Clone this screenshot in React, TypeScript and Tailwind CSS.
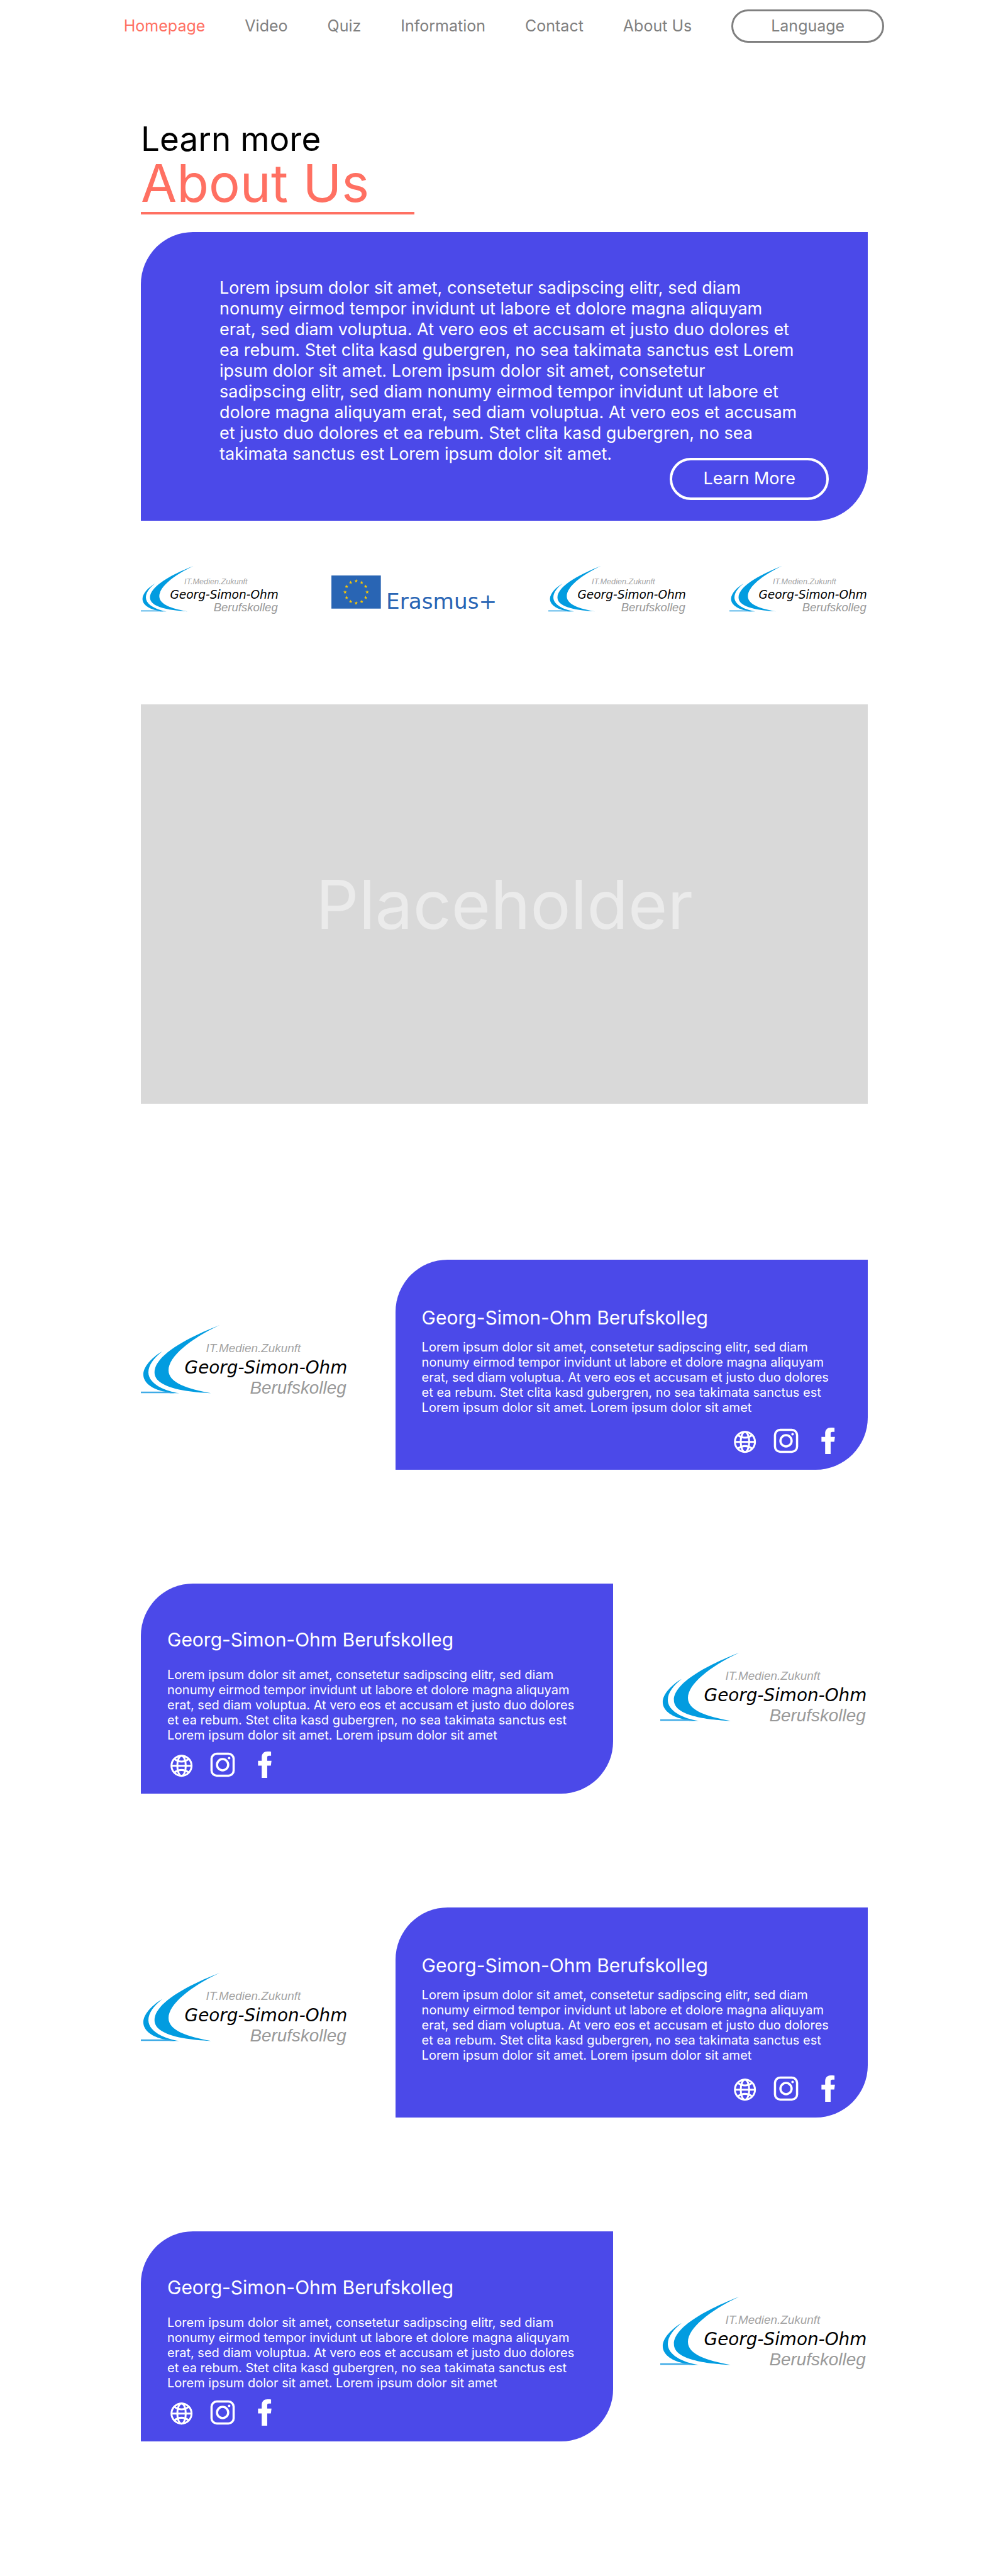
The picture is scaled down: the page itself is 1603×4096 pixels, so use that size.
import React from "react";

const NAV_LINKS = ["Homepage", "Video", "Quiz", "Information", "Contact", "About Us"];

const HERO_TEXT_START =
  "Lorem ipsum dolor sit amet, consetetur sadipscing elitr, sed diam nonumy eirmod tempor invidunt ut labore et dolore magna aliquyam erat, sed diam voluptua. At vero eos et accusam et justo duo dolores et ea rebum. Stet clita kasd gubergren, no sea takimata sanctus est Lorem ipsum dolor sit amet. Lorem ipsum dolor sit amet, consetetur";

const HERO_TEXT_END =
  "sadipscing elitr, sed diam nonumy eirmod tempor invidunt ut labore et dolore magna aliquyam erat, sed diam voluptua. At vero eos et accusam et justo duo dolores et ea rebum. Stet clita kasd gubergren, no sea takimata sanctus est Lorem ipsum dolor sit amet.";

const CARD_TEXT =
  "Lorem ipsum dolor sit amet, consetetur sadipscing elitr, sed diam nonumy eirmod tempor invidunt ut labore et dolore magna aliquyam erat, sed diam voluptua. At vero eos et accusam et justo duo dolores et ea rebum. Stet clita kasd gubergren, no sea takimata sanctus est Lorem ipsum dolor sit amet. Lorem ipsum dolor sit amet";

function OhmLogo({ className }: { className: string }) {
  return (
    <svg viewBox="24 70 1185 412" className={className} role="img" aria-label="Georg-Simon-Ohm Berufskolleg">
      <path
        d="M474 70C330 126 102 232 102 340C102 430 290 452 425 459C290 435 182 400 182 328C182 250 304 150 474 70Z"
        fill="#029ce0"
      />
      <path
        d="M146 220C90 252 38 306 38 352C38 405 100 440 165 451L190 459H244C150 445 67 400 67 340C67 295 102 255 146 220Z"
        fill="#029ce0"
      />
      <path d="M24 450H175L215 459H24Z" fill="#3fabe6" />
      <text x="396" y="224" fontSize="68" fontStyle="italic" fontFamily="'Liberation Sans', sans-serif" fill="#a3a3a3">
        IT.Medien.Zukunft
      </text>
      <text x="274" y="348" fontSize="100" fontStyle="italic" fontFamily="'DejaVu Sans', sans-serif" fill="#000">
        Georg-Simon-Ohm
      </text>
      <text x="647" y="460" fontSize="100" fontStyle="italic" fontFamily="'Liberation Sans', sans-serif" fill="#999">
        Berufskolleg
      </text>
    </svg>
  );
}

const STAR = "M0-3.6L.9-1.1H3.4L1.4.5L2.1 3L0 1.5L-2.1 3L-1.4.5L-3.4-1.1H-.9Z";

function ErasmusLogo({ className }: { className: string }) {
  return (
    <svg viewBox="0 0 348 91" className={className} role="img" aria-label="Erasmus+">
      <rect x="18" y="18" width="94" height="63" fill="#2965b4" />
      {Array.from({ length: 12 }, (_, i) => {
        const angle = (i * Math.PI) / 6;
        return (
          <path
            key={i}
            d={STAR}
            fill="#fdc900"
            transform={`translate(${65 + 21 * Math.sin(angle)} ${49.5 - 21 * Math.cos(angle)})`}
          />
        );
      })}
      <text x="122" y="81" fontSize="41" fontFamily="'DejaVu Sans', sans-serif" fill="#2965b4">
        Erasmus+
      </text>
    </svg>
  );
}

function GlobeIcon() {
  return (
    <svg viewBox="0 0 50 50" className="size-[42px]" fill="none" stroke="#fff" strokeWidth="3.6">
      <circle cx="27" cy="27" r="19" />
      <ellipse cx="27" cy="27" rx="8" ry="19" />
      <path d="M8 27H46M13 14Q27 24 41 14M13 40Q27 30 41 40" />
    </svg>
  );
}

function InstagramIcon() {
  return (
    <svg viewBox="0 0 50 50" className="size-[42px]" fill="none" stroke="#fff" strokeWidth="4.2">
      <rect x="4.1" y="4.1" width="41.8" height="41.8" rx="10" />
      <circle cx="25" cy="25" r="10.6" />
      <circle cx="37.4" cy="12.6" r="2.4" fill="#fff" stroke="none" />
    </svg>
  );
}

function FacebookIcon() {
  return (
    <svg viewBox="0 0 50 50" className="size-[42px]" fill="#fff">
      <path d="M19.3 50V26.8H12.3V17.5H19.3V11C19.3 4 23.6 0 30.2 0C33.2 0 35.6.2 37 .4V8H32.8C30.2 8 29.7 9.4 29.7 11.4V17.5H37.8L36.6 26.8H29.7V50Z" />
    </svg>
  );
}

function SocialLinks({ className }: { className: string }) {
  return (
    <div className={`flex gap-[25px] ${className}`}>
      <a href="#website" aria-label="Website">
        <GlobeIcon />
      </a>
      <a href="#instagram" aria-label="Instagram">
        <InstagramIcon />
      </a>
      <a href="#facebook" aria-label="Facebook">
        <FacebookIcon />
      </a>
    </div>
  );
}

function Partner({ flipped = false, logoClass = "" }: { flipped?: boolean; logoClass?: string }) {
  return (
    <article className={`flex items-center justify-between ${flipped ? "flex-row-reverse" : ""}`}>
      <div className={logoClass}>
        <OhmLogo className="w-[330px]" />
      </div>
      <div
        className={`w-[65%] rounded-tl-[83px] rounded-br-[83px] bg-[#4b49e9] px-[42px] pb-[25px] text-white ${
          flipped ? "pt-[71px]" : "pt-[74px]"
        }`}
      >
        <h2 className="text-[30px] leading-9">Georg-Simon-Ohm Berufskolleg</h2>
        <p className={`text-[20px] leading-6 ${flipped ? "mt-[26px]" : "mt-[17px]"}`}>{CARD_TEXT}</p>
        <SocialLinks className={flipped ? "mt-[14px]" : "mt-5 justify-end"} />
      </div>
    </article>
  );
}

export default function App() {
  return (
    <div className="min-h-screen bg-white font-['Inter',sans-serif] text-black">
      <header className="pt-[15px]">
        <nav className="flex items-center justify-center gap-[63px] text-[25px] text-[#808080]">
          {NAV_LINKS.map((label) => (
            <a
              key={label}
              href={`#${label.toLowerCase().replace(" ", "-")}`}
              className={label === "Homepage" ? "text-[#ff7062]" : ""}
            >
              {label}
            </a>
          ))}
          <button type="button" className="h-[53px] rounded-full border-[3px] border-[#808080] px-[60px]">
            Language
          </button>
        </nav>
      </header>

      <main className="pt-[124px] pr-[223px] pb-[214px] pl-56">
        <h1 className="flex flex-col items-start">
          <span className="text-[53px] leading-[58px]">Learn more</span>
          <span className="w-[435px] border-b-4 border-[#ff7062] pb-[5px] text-[83px] leading-[82px] text-[#ff7062]">
            About Us
          </span>
        </h1>

        <section className="mt-7 rounded-tl-[83px] rounded-br-[83px] bg-[#4b49e9] pt-[72px] pr-[62px] pb-[33px] pl-[125px] text-[27px] text-white">
          <p className="mr-[50px] leading-[33px]">
            {HERO_TEXT_START}
            <br />
            {HERO_TEXT_END}
          </p>
          <div className="-mt-[10px] flex justify-end">
            <button type="button" className="h-[67px] rounded-full border-4 border-white px-[49px]">
              Learn More
            </button>
          </div>
        </section>

        <section className="mt-[72px] flex items-start justify-between" aria-label="Partners">
          <OhmLogo className="w-[220px]" />
          <ErasmusLogo className="w-[291px]" />
          <OhmLogo className="w-[220px]" />
          <OhmLogo className="w-[220px]" />
        </section>

        <section className="mt-36 flex h-[635px] items-center justify-center bg-[#d9d9d9] text-[107px] text-[#ebebeb]">
          Placeholder
        </section>

        <div className="mt-[248px] flex flex-col gap-[181px]">
          <Partner logoClass="pb-3" />
          <Partner flipped />
          <Partner logoClass="pb-3" />
          <Partner flipped logoClass="pb-3" />
        </div>
      </main>
    </div>
  );
}
